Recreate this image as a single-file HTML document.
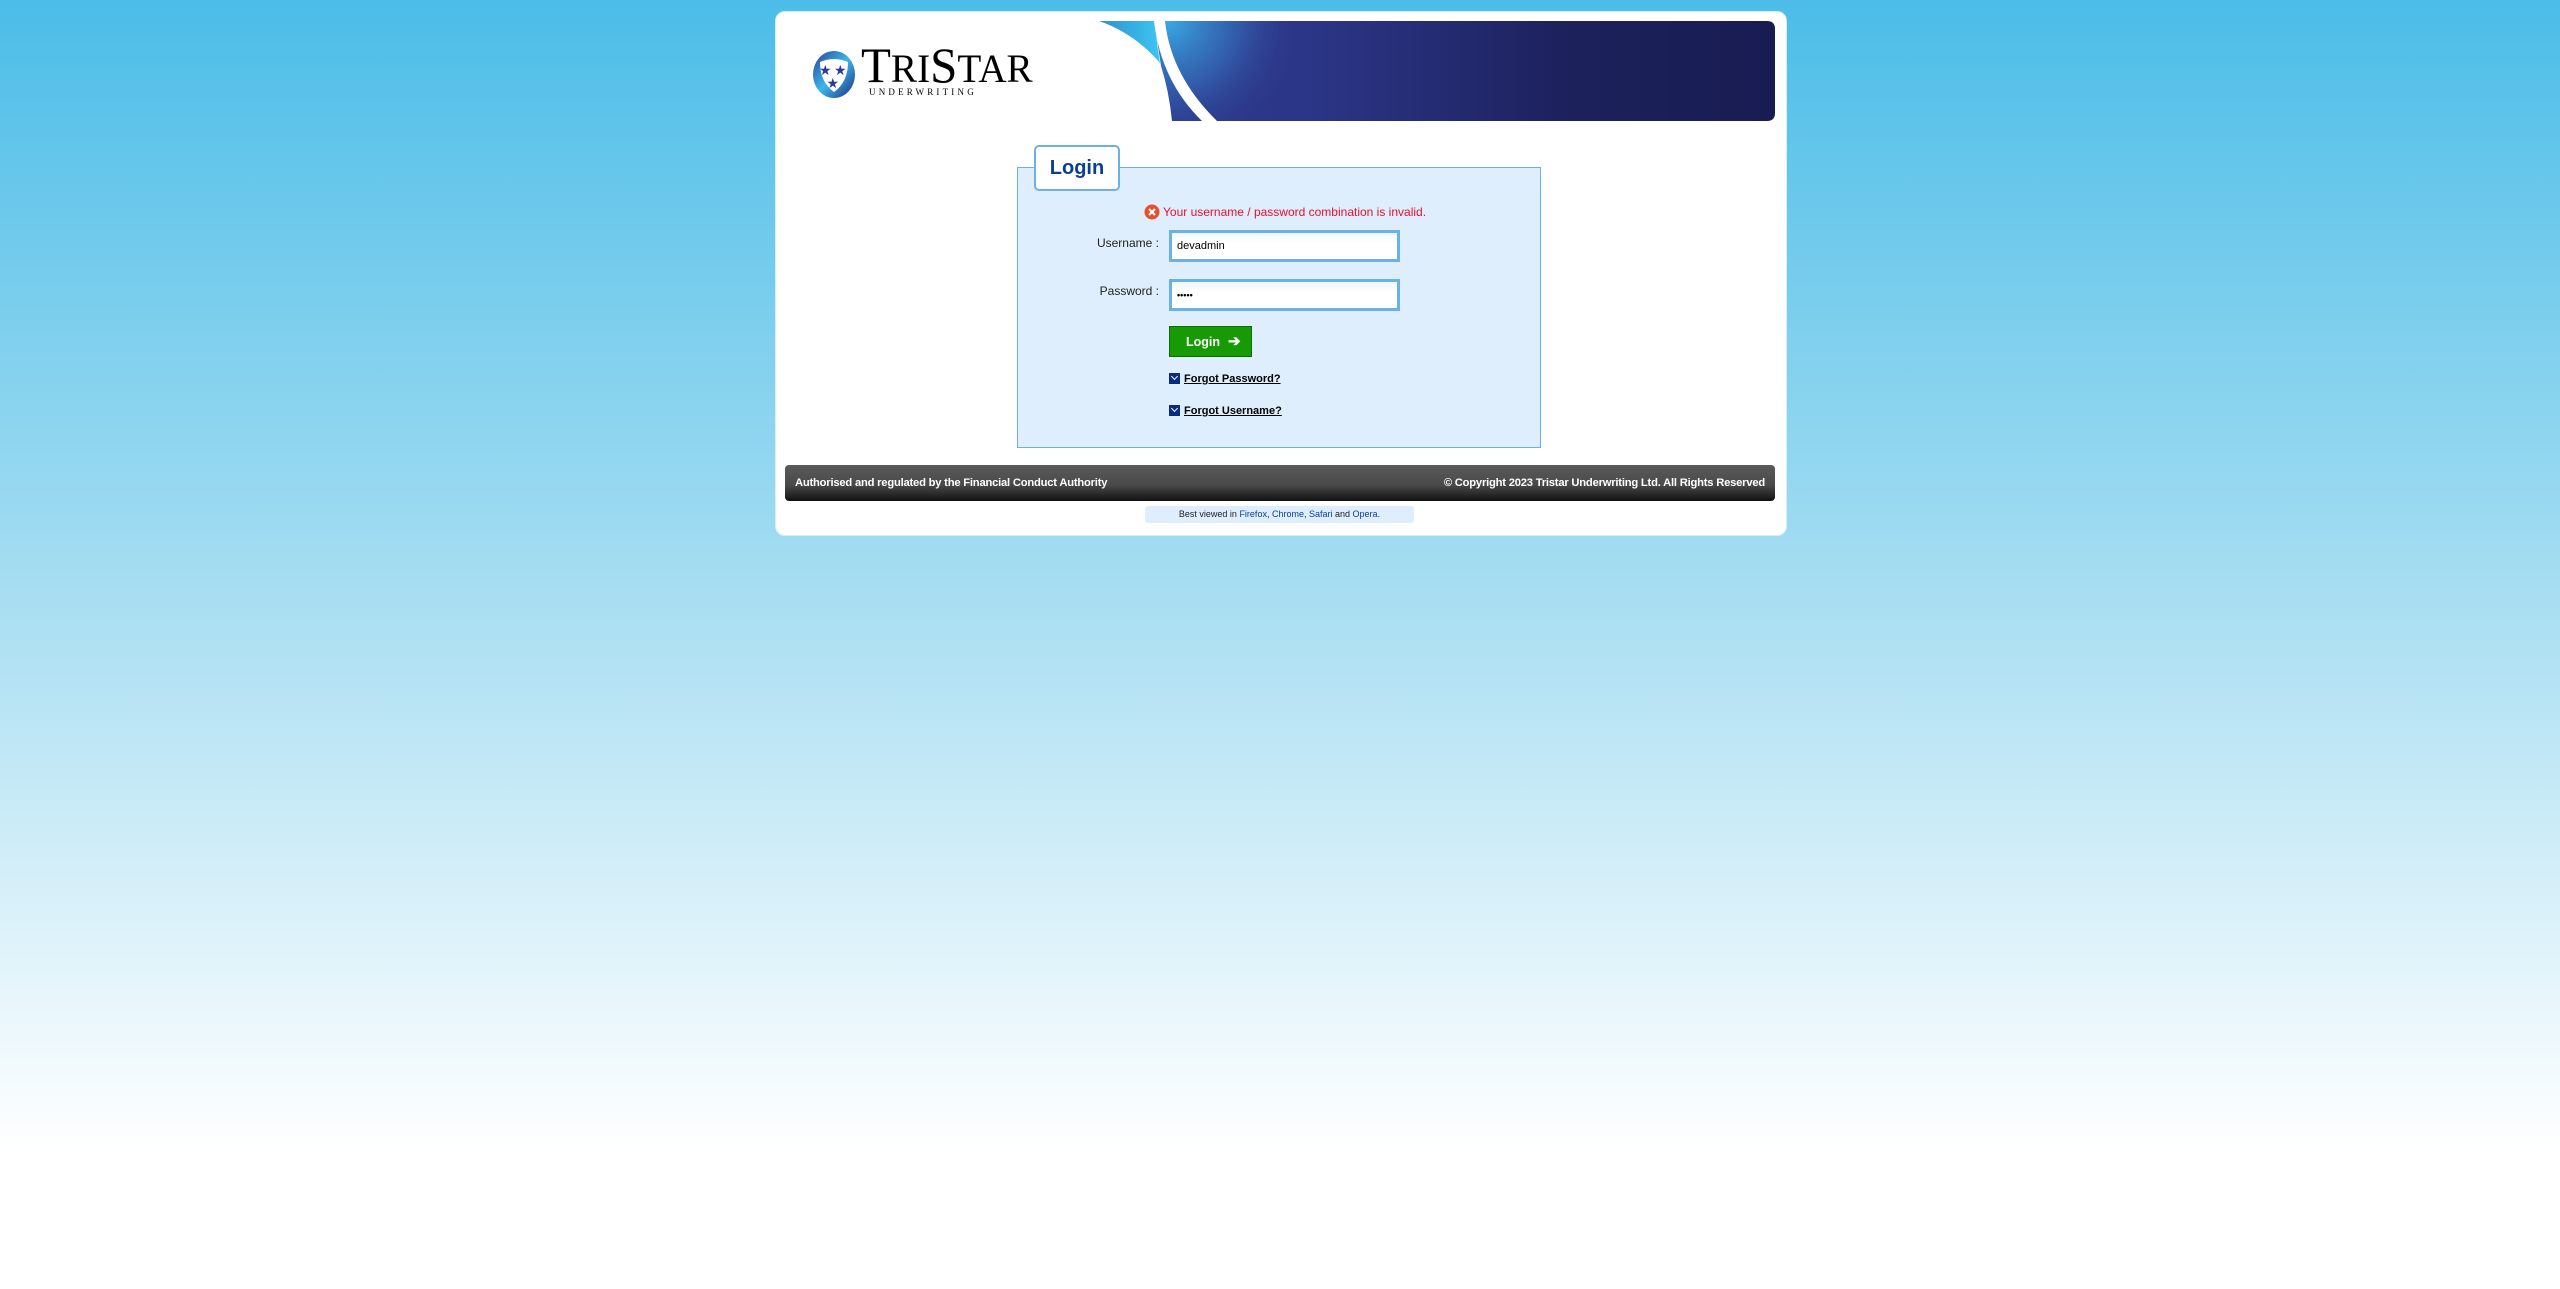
<!DOCTYPE html>
<html><head><meta charset="utf-8"><style>
html,body{margin:0;padding:0}
body{width:2560px;height:1289px;background:linear-gradient(#4bbde8 0px,#a8def2 600px,#ffffff 1150px,#fff 1289px);font-family:"Liberation Sans",Arial,sans-serif;position:relative;overflow:hidden}
.card{position:absolute;left:775px;top:11px;width:1010px;height:523px;background:#fff;border-radius:10px;border:1px solid #d8eef8}
.abs{position:absolute}
.panel{position:absolute;left:1017px;top:167px;width:522px;height:279px;background:#deeefc;border:1px solid #6cb1e6}
.tab{position:absolute;left:1034px;top:145px;width:82px;height:42px;background:#fff;border:2px solid #6cb1e6;border-radius:5px;font-weight:bold;color:#0b3f94;font-size:20px;text-align:center;line-height:42px}
.lbl{position:absolute;font-size:12px;color:#222;text-align:right;width:120px}
.inp{position:absolute;left:1169px;width:220px;height:26px;border:3px solid #6cb1e6;background:linear-gradient(#eef6fc,#fff 40%);font-size:11px;line-height:26px;padding-left:5px;box-sizing:content-box}
.fg{position:absolute;left:1169px;font-size:11px;font-weight:bold;color:#000;text-decoration:underline}
.fg i{display:inline-block;width:11px;height:11px;background:#0a2a80;vertical-align:-2px;margin-right:4px;position:relative}
.fg i:after{content:"";position:absolute;left:3px;top:1px;width:4px;height:4px;border-right:1.5px solid #fff;border-bottom:1.5px solid #fff;transform:rotate(45deg)}
.foot{position:absolute;left:785px;top:465px;width:990px;height:36px;border-radius:4px;background:linear-gradient(#5a5a5a,#4a4a4a 55%,#111);color:#fff;font-size:11.2px;font-weight:bold;line-height:36px;letter-spacing:-0.2px}
</style></head><body>
<div class="card"></div>
<svg class="abs" style="left:1099px;top:21px" width="676" height="100" viewBox="0 0 676 100">
<defs>
<linearGradient id="g" x1="0" y1="0" x2="1" y2="0"><stop offset="0" stop-color="#2e3a8c"/><stop offset="0.3" stop-color="#2c3688"/><stop offset="0.7" stop-color="#1c215c"/><stop offset="1" stop-color="#191c52"/></linearGradient>
<radialGradient id="r" cx="70" cy="0" r="130" gradientUnits="userSpaceOnUse"><stop offset="0" stop-color="#3aa8e4"/><stop offset="0.5" stop-color="#3570bc" stop-opacity="0.7"/><stop offset="1" stop-color="#2e3a8c" stop-opacity="0"/></radialGradient>
<linearGradient id="s" x1="0" y1="0" x2="1" y2="0"><stop offset="0" stop-color="#2f8fd0"/><stop offset="1" stop-color="#3cc6f2"/></linearGradient>
<clipPath id="c"><path d="M0 0H668Q676 0 676 8V92Q676 100 668 100H0Z"/></clipPath>
</defs>
<g clip-path="url(#c)">
<rect width="676" height="100" fill="url(#g)"/>
<rect width="676" height="100" fill="url(#r)"/>
<path d="M0 0H56Q58 20 62 45Q70 70 73 100H0Z" fill="#fff"/>
<path d="M0 0H56Q58 25 61 42Q35 12 0 0Z" fill="url(#s)"/>
<path d="M55 0Q62 60 103 100H118Q72 55 66 0Z" fill="#fff"/>
</g>
</svg>
<svg class="abs" style="left:812px;top:50px" width="44" height="49" viewBox="0 0 44 49">
<defs><linearGradient id="lg" x1="0" y1="0" x2="1" y2="1"><stop offset="0" stop-color="#2a3c96"/><stop offset="0.5" stop-color="#3db8ea"/><stop offset="1" stop-color="#1d2a80"/></linearGradient></defs>
<ellipse cx="22" cy="24.5" rx="21" ry="23.5" fill="url(#lg)"/>
<path d="M8 12Q22 6 36 12Q36 32 22 42Q8 32 8 12Z" fill="#fff"/>
<g fill="#2a3a96" font-size="14" font-family="DejaVu Sans"><text x="7" y="25">★</text><text x="22" y="25">★</text><text x="14.5" y="38">★</text></g>
</svg>
<div class="abs" style="left:861px;top:40px;font-family:'Liberation Serif',serif;font-size:50px;color:#000;letter-spacing:0px;line-height:50px;transform:scaleX(0.98);transform-origin:left">T<span style="font-size:40px">RI</span>S<span style="font-size:40px">TAR</span></div>
<div class="abs" style="left:869px;top:87px;font-family:'Liberation Serif',serif;font-size:9px;letter-spacing:3.2px;color:#000">UNDERWRITING</div>
<div class="panel"></div>
<div class="tab">Login</div>
<svg class="abs" style="left:1144px;top:204px" width="16" height="16"><circle cx="8" cy="8" r="7.5" fill="#e9502a"/><path d="M5 5L11 11M11 5L5 11" stroke="#fff" stroke-width="2.2"/></svg>
<div class="abs" style="left:1163px;top:205px;font-size:12px;color:#e8102a">Your username / password combination is invalid.</div>
<div class="lbl" style="left:1039px;top:236px">Username :</div>
<div class="lbl" style="left:1039px;top:284px">Password :</div>
<div class="inp" style="top:230px">devadmin</div>
<div class="inp" style="top:279px;font-size:9px;font-weight:bold;letter-spacing:0px">•••••</div>
<div class="abs" style="left:1169px;top:326px;width:81px;height:29px;background:#179b05;border:1px solid #0c6d02;color:#fff;font-weight:bold;font-size:12.5px;line-height:29px;box-sizing:content-box"><span style="margin-left:16px">Login</span><span style="margin-left:8px;font-size:15px">➔</span></div>
<div class="fg" style="top:373px"><i></i>Forgot Password?</div>
<div class="fg" style="top:405px"><i></i>Forgot Username?</div>
<div class="foot"><span style="position:absolute;left:10px">Authorised and regulated by the Financial Conduct Authority</span><span style="position:absolute;right:10px">© Copyright 2023 Tristar Underwriting Ltd. All Rights Reserved</span></div>
<div class="abs" style="left:1145px;top:506px;width:269px;height:17px;background:#deeefc;border-radius:3px;font-size:9px;line-height:17px;text-align:center;color:#222">Best viewed in <span style="color:#0b3f94">Firefox</span>, <span style="color:#0b3f94">Chrome</span>, <span style="color:#0b3f94">Safari</span> and <span style="color:#0b3f94">Opera</span>.</div>
</body></html>
